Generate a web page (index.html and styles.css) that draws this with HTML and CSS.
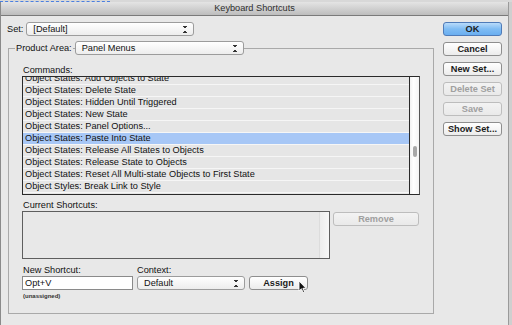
FILE: index.html
```html
<!DOCTYPE html>
<html>
<head>
  <link rel="stylesheet" href="styles.css">
</head>
<body>
  <div class="desk"><span class="desk-sel"></span></div>
  <div class="window">
    <div class="titlebar">Keyboard Shortcuts</div>

    <div class="content">
      <div class="main">
        <div class="set-row">
          <span class="lbl">Set:</span>
          <div class="popup popup-set">[Default]<span class="arrows"></span></div>
        </div>

        <div class="group">
          <div class="group-head">
            <span class="lbl legend">Product Area:</span>
            <div class="popup popup-area">Panel Menus<span class="arrows"></span></div>
          </div>

          <div class="field-label">Commands:</div>
          <div class="list">
            <div class="rows">
              <div class="row first">Object States: Add Objects to State</div>
              <div class="row">Object States: Delete State</div>
              <div class="row">Object States: Hidden Until Triggered</div>
              <div class="row">Object States: New State</div>
              <div class="row">Object States: Panel Options...</div>
              <div class="row selected">Object States: Paste Into State</div>
              <div class="row">Object States: Release All States to Objects</div>
              <div class="row">Object States: Release State to Objects</div>
              <div class="row">Object States: Reset All Multi-state Objects to First State</div>
              <div class="row">Object Styles: Break Link to Style</div>
              <div class="row">Object Styles: Clear Overrides</div>
            </div>
            <div class="scroll"><div class="thumb"></div></div>
          </div>

          <div class="field-label tight">Current Shortcuts:</div>
          <div class="shortcuts-row">
            <div class="shortcuts-box"><div class="box-strip"></div></div>
            <button class="btn btn-remove" disabled>Remove</button>
          </div>

          <div class="assign-labels">
            <span class="col-new">New Shortcut:</span>
            <span>Context:</span>
          </div>
          <div class="assign-row">
            <div class="input">Opt+V</div>
            <div class="popup popup-context">Default<span class="arrows"></span></div>
            <button class="btn btn-assign">Assign</button>
            <svg class="cursor" width="9" height="14" viewBox="0 0 9 14">
              <path d="M1 1 L1 11 L3.4 8.8 L5.2 12.6 L6.6 12 L4.9 8.3 L8 8.3 Z" fill="#111" stroke="#fff" stroke-width="0.9"/>
            </svg>
          </div>
          <div class="hint">(unassigned)</div>
        </div>
      </div>

      <div class="side">
        <button class="btn btn-ok">OK</button>
        <button class="btn">Cancel</button>
        <button class="btn">New Set...</button>
        <button class="btn" disabled>Delete Set</button>
        <button class="btn" disabled>Save</button>
        <button class="btn">Show Set...</button>
      </div>
    </div>
  </div>
</body>
</html>
```

FILE: styles.css
```css
body {
  margin: 0;
  width: 512px;
  height: 325px;
  overflow: hidden;
  background: #cfcfcf;
  font-family: "Liberation Sans", Arial, sans-serif;
  font-size: 9.2px;
  color: #111;
}

.desk {
  height: 2px;
  background: #d8d8d8;
}

.desk-sel {
  display: block;
  width: 110px;
  height: 1px;
  border-bottom: 1px dashed #4a7fe0;
}

.window {
  width: 509px;
  height: 323px;
  background: #e8e8e8;
  border-left: 1px solid #8a8a8a;
  border-right: 1px solid #9a9a9a;
  box-sizing: border-box;
}

.titlebar {
  height: 14px;
  line-height: 13px;
  text-align: center;
  color: #2e2e2e;
  background: linear-gradient(#e4e4e4, #bdbdbd);
  border-bottom: 1px solid #7a7a7a;
  box-sizing: border-box;
}

.content {
  display: flex;
  padding: 6px 0 0 6px;
}

.main {
  width: 426px;
}

.set-row {
  display: flex;
  align-items: center;
  height: 14px;
}

.lbl {
  margin-right: 3px;
}

.popup {
  position: relative;
  height: 14px;
  line-height: 13px;
  box-sizing: border-box;
  padding-left: 6px;
  border: 1px solid #9c9c9c;
  border-radius: 3px;
  background: linear-gradient(#ffffff, #ededed);
  white-space: nowrap;
}

.arrows {
  position: absolute;
  right: 6px;
  top: 3px;
  width: 4px;
  height: 7px;
  background:
    linear-gradient(to top right, transparent 50%, #333 50%) 0 0 / 2px 3px no-repeat,
    linear-gradient(to top left, transparent 50%, #333 50%) 2px 0 / 2px 3px no-repeat,
    linear-gradient(to bottom right, transparent 50%, #333 50%) 0 4px / 2px 3px no-repeat,
    linear-gradient(to bottom left, transparent 50%, #333 50%) 2px 4px / 2px 3px no-repeat;
}

.popup-set {
  width: 168px;
}

.group {
  margin-top: 12px;
  margin-left: 1px;
  width: 426px;
  height: 266px;
  box-sizing: border-box;
  border: 1px solid #a9a9a9;
  padding: 0 0 0 13px;
}

.group-head {
  display: flex;
  align-items: center;
  margin: -8px 0 0 -7px;
  height: 14px;
}

.legend {
  background: #e8e8e8;
  padding: 0 1px;
  margin-right: 2px;
}

.popup-area {
  width: 169px;
}

.field-label {
  height: 12px;
  line-height: 12px;
  margin-top: 9px;
  padding-left: 1px;
}

.field-label.tight {
  margin-top: 4px;
}

.list {
  display: flex;
  width: 398px;
  height: 119px;
  box-sizing: border-box;
  border: 1px solid #2a2a2a;
  border-right-color: #555;
}

.rows {
  flex: 1;
  overflow: hidden;
  border-right: 1px solid #2a2a2a;
}

.row {
  height: 11px;
  line-height: 11px;
  padding-left: 2px;
  background: #e6e6e6;
  border-bottom: 1px solid #f6f6f6;
  white-space: nowrap;
}

.row.first {
  margin-top: -4px;
}

.row.selected {
  background: #a7c7f6;
}

.scroll {
  width: 9px;
  background: linear-gradient(to right, #f2f2f2, #ffffff 40%, #f4f4f4);
}

.thumb {
  width: 4px;
  height: 11px;
  margin: 69px 0 0 3px;
  border-radius: 2px;
  background: #a8a8a8;
}

.shortcuts-row {
  display: flex;
  align-items: flex-start;
}

.shortcuts-box {
  display: flex;
  justify-content: flex-end;
  width: 308px;
  height: 48px;
  box-sizing: border-box;
  border: 1px solid #5e5e5e;
  background: #e8e8e8;
}

.box-strip {
  width: 9px;
  background: linear-gradient(to right, #ededed, #f7f7f7);
  border-left: 1px solid #dcdcdc;
}

.btn {
  display: block;
  height: 14px;
  padding: 0;
  box-sizing: border-box;
  border: 1px solid #8e8e8e;
  border-radius: 3px;
  background: linear-gradient(#ffffff, #ececec);
  font-family: inherit;
  font-size: 9.2px;
  font-weight: bold;
  line-height: 12px;
  color: #1c1c1c;
}

.btn:disabled {
  color: #a0a0a0;
  border-color: #bdbdbd;
  background: linear-gradient(#f3f3f3, #e9e9e9);
}

.btn-remove {
  width: 86px;
  margin: 1px 0 0 3px;
}

.assign-labels {
  display: flex;
  height: 12px;
  line-height: 12px;
  margin-top: 5px;
  padding-left: 1px;
}

.col-new {
  width: 114px;
}

.assign-row {
  position: relative;
  display: flex;
  gap: 4px;
  height: 14px;
}

.input {
  width: 111px;
  height: 14px;
  box-sizing: border-box;
  line-height: 12px;
  padding-left: 2px;
  border: 1px solid #8a8a8a;
  background: #fff;
}

.popup-context {
  width: 108px;
}

.btn-assign {
  width: 59px;
}

.cursor {
  position: absolute;
  left: 276px;
  top: 4px;
}

.hint {
  margin-top: 3px;
  padding-left: 1px;
  font-size: 6px;
  font-weight: bold;
  color: #333;
}

.side {
  display: flex;
  flex-direction: column;
  gap: 6px;
  margin-left: 10px;
}

.side .btn {
  width: 59px;
}

.btn-ok {
  border-color: #4f7bb8;
  background: linear-gradient(#b9dbfa, #7fbcf3 50%, #6aaef0);
}
```
